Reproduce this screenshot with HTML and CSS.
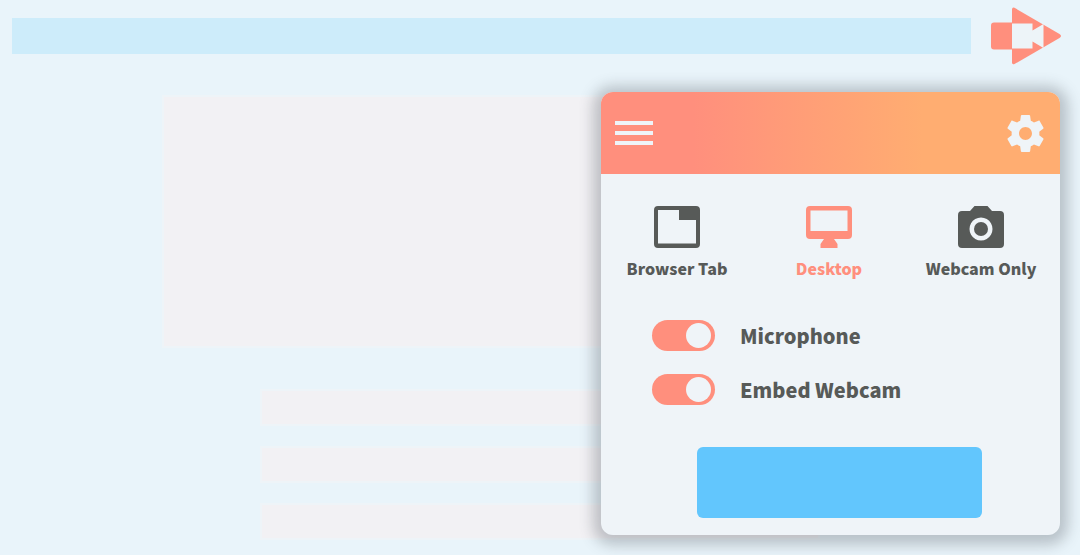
FILE: index.html
```html
<!DOCTYPE html>
<html lang="en">
<head>
  <meta charset="UTF-8" />
  <meta name="viewport" content="width=device-width, initial-scale=1" />
  <title>Screen Recorder</title>
  <link rel="stylesheet" href="styles.css">
</head>
<body>
  <header class="toolbar">
    <div class="address-bar"></div>
    <svg class="logo" viewBox="0 0 72 58" aria-hidden="true">
      <path class="logo-mark" d="M22 2.5Q22 0 24.5 .8L69.5 27Q72.500 29 69.500 31L24.500 57Q22 58 22 55.500Z" />
      <path class="logo-mark" d="M22 15.500H4Q1 15.500 1 18.500V39.500Q1 42.500 4 42.500H22Z" />
      <path class="logo-camera" d="M22 16.500H42.500V23.500L53.500 17V41L42.500 34.500V41.500H22Z" />
    </svg>
  </header>

  <!-- Page skeleton -->
  <main class="page">
    <div class="hero"></div>
    <div class="rows">
      <div class="row"></div>
      <div class="row"></div>
      <div class="row"></div>
    </div>
  </main>

  <!-- Recorder popup -->
  <section class="popup">
    <div class="popup-header">
      <button class="icon-btn" aria-label="Menu">
        <svg class="menu-icon" viewBox="0 0 38 26"><path d="M0 1h38v4H0zM0 11h38v4H0zM0 21h38v4H0z" /></svg>
      </button>
      <button class="icon-btn" aria-label="Settings">
        <svg class="gear-icon" viewBox="2 2 20 20"><path d="M19.430 12.980c.04-.32.07-.64.07-.98s-.03-.66-.07-.98l2.110-1.650c.19-.15.24-.42.12-.64l-2-3.460c-.12-.22-.39-.3-.61-.22l-2.490 1c-.52-.4-1.080-.73-1.690-.98l-.38-2.650C14.460 2.180 14.250 2 14 2h-4c-.25 0-.46.18-.49.42l-.38 2.650c-.61.25-1.170.59-1.690.98l-2.490-1c-.23-.09-.49 0-.61.22l-2 3.460c-.13.22-.07.49.12.64l2.110 1.650c-.04.32-.07.65-.07.98s.03.66.07.98l-2.110 1.650c-.19.15-.24.42-.12.64l2 3.460c.12.22.39.3.61.22l2.490-1c.52.4 1.080.73 1.690.98l.38 2.650c.03.24.24.42.49.42h4c.25 0 .46-.18.49-.42l.38-2.650c.61-.25 1.170-.59 1.690-.98l2.490 1c.23.09.49 0 .61-.22l2-3.460c.12-.22.07-.49-.12-.64l-2.110-1.650zM12 15.500c-1.930 0-3.500-1.570-3.500-3.500s1.570-3.500 3.500-3.500 3.500 1.570 3.500 3.500-1.570 3.500-3.500 3.500z" /></svg>
      </button>
    </div>

    <div class="modes">
      <button class="mode">
        <svg class="mode-icon" viewBox="0 0 46 42"><path fill-rule="evenodd" d="M4 0H42Q46 0 46 4V38Q46 42 42 42H4Q0 42 0 38V4Q0 0 4 0ZM4 4V37.500H42V14H25V4Z" /></svg>
        Browser Tab
      </button>
      <button class="mode active">
        <svg class="mode-icon" viewBox="0 0 46 42"><path fill-rule="evenodd" d="M4 0H42Q46 0 46 4V29Q46 33 42 33H28L31.500 38V42H14.500V38L18 33H4Q0 33 0 29V4Q0 0 4 0ZM4.500 4.500V25H41.500V4.500Z" /></svg>
        Desktop
      </button>
      <button class="mode">
        <svg class="mode-icon" viewBox="0 0 46 42"><path fill-rule="evenodd" d="M4 5H12L16.500 0H29.500L34 5H42Q46 5 46 9V38Q46 42 42 42H4Q0 42 0 38V9Q0 5 4 5ZM23 11.500a11.500 11.500 0 1 0 .01 0Z" /><circle cx="23" cy="23" r="7" /></svg>
        Webcam Only
      </button>
    </div>

    <div class="options">
      <label class="option"><input type="checkbox" class="switch" checked> Microphone</label>
      <label class="option"><input type="checkbox" class="switch" checked> Embed Webcam</label>
    </div>

    <button class="record-btn" aria-label="Record"></button>
  </section>
</body>
</html>
```

FILE: styles.css
```css
* {
  margin: 0;
  padding: 0;
  box-sizing: border-box;
}

body {
  background: #e9f4fa;
  color: #575a58;
  font-family: 'Noto Sans CJK SC', 'Open Sans', sans-serif;
  font-weight: 900;
  position: relative;
}

.toolbar {
  display: flex;
  align-items: center;
  gap: 19px;
  padding: 7px 18px 0 12px;
}

.address-bar {
  flex: 1;
  height: 36px;
  background: #cdecfa;
}

.logo {
  width: 72px;
  height: 58px;
}

.logo-mark {
  fill: #ff8f7d;
}

.logo-camera {
  fill: #edf4f8;
}

.page {
  padding: 30px 15% 16px;
}

.hero,
.row {
  background: #f2f1f4;
  border: 2px solid #eef4f8;
}

.hero {
  height: 253px;
}

.rows {
  display: flex;
  flex-direction: column;
  gap: 20px;
  margin-top: 41px;
  padding: 0 13%;
}

.row {
  height: 37px;
}

.popup {
  position: absolute;
  top: 92px;
  right: 20px;
  width: 42.5%;
  padding-bottom: 17px;
  background: #eff4f8;
  border-radius: 12px;
  box-shadow: 0 2px 14px 8px rgba(80, 88, 96, 0.32);
}

.popup-header {
  display: flex;
  justify-content: space-between;
  align-items: center;
  height: 82px;
  padding: 0 16px 0 14px;
  background: linear-gradient(to right, #ff8f7d 20%, #ffad71 70%);
  border-radius: 12px 12px 0 0;
}

button {
  border: none;
  background: none;
  color: inherit;
  font: inherit;
  cursor: pointer;
}

svg {
  display: block;
  fill: currentColor;
}

.icon-btn {
  color: #eff4f8;
}

.menu-icon {
  width: 38px;
  height: 26px;
}

.gear-icon {
  width: 37px;
  height: 37px;
}

.modes {
  display: flex;
  padding: 32px 3px 0 0;
}

.mode {
  flex: 1;
  display: flex;
  flex-direction: column;
  align-items: center;
  gap: 8px;
  font-size: 16px;
  line-height: 24px;
}

.mode-icon {
  width: 46px;
  height: 42px;
}

.active {
  color: #ff8f7d;
}

.options {
  display: flex;
  flex-direction: column;
  align-items: flex-start;
  gap: 23px;
  margin: 40px 0 42px;
  padding-left: 51px;
}

.option {
  display: flex;
  align-items: center;
  gap: 25px;
  font-size: 20px;
  line-height: 31px;
  cursor: pointer;
}

.switch {
  appearance: none;
  display: flex;
  align-items: center;
  width: 63px;
  height: 31px;
  padding: 0 4px;
  background: #c5cdd3;
  border-radius: 16px;
}

.switch::before {
  content: '';
  width: 25px;
  height: 25px;
  background: #eff4f8;
  border-radius: 50%;
}

.switch:checked {
  justify-content: flex-end;
  background: #ff8f7d;
}

.record-btn {
  display: block;
  width: 62%;
  height: 71px;
  margin: 0 17% 0 auto;
  background: #62c6fd;
  border-radius: 6px;
}
```
